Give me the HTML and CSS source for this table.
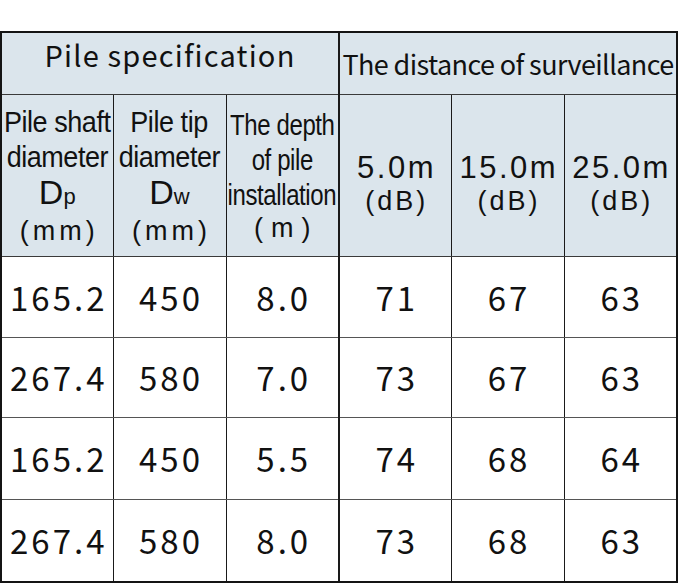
FILE: index.html
```html
<!DOCTYPE html>
<html>
<head>
<meta charset="utf-8">
<link rel="stylesheet" href="styles.css">
</head>
<body>
<div class="wrap">
<table class="spec">
  <colgroup>
    <col class="c1"><col class="c2"><col class="c3"><col class="c4"><col class="c5"><col class="c6">
  </colgroup>
  <thead>
    <tr class="h1">
      <th colspan="3" class="big">Pile specification</th>
      <th colspan="3" class="mid">The distance of surveillance</th>
    </tr>
    <tr class="h2">
      <th><div class="stack"><span class="cond">Pile shaft</span><span class="cond">diameter</span><span class="dd">D<small>p</small></span><span class="par">(mm)</span></div></th>
      <th><div class="stack"><span class="cond">Pile tip</span><span class="cond">diameter</span><span class="dd">D<small>w</small></span><span class="par">(mm)</span></div></th>
      <th class="depth"><div class="stack"><span class="cond">The depth</span><span class="cond">of pile</span><span class="cond">installation</span><span class="par one">(m)</span></div></th>
      <th class="split dcol"><div class="stack"><span class="dist">5.0m</span><span class="par">(dB)</span></div></th>
      <th class="dcol"><div class="stack"><span class="dist">15.0m</span><span class="par">(dB)</span></div></th>
      <th class="dcol"><div class="stack"><span class="dist">25.0m</span><span class="par">(dB)</span></div></th>
    </tr>
  </thead>
  <tbody>
    <tr class="r1"><td>165.2</td><td>450</td><td>8.0</td><td class="split">71</td><td>67</td><td>63</td></tr>
    <tr class="r2"><td>267.4</td><td>580</td><td>7.0</td><td class="split">73</td><td>67</td><td>63</td></tr>
    <tr class="r3"><td>165.2</td><td>450</td><td>5.5</td><td class="split">74</td><td>68</td><td>64</td></tr>
    <tr class="r4"><td>267.4</td><td>580</td><td>8.0</td><td class="split">73</td><td>68</td><td>63</td></tr>
  </tbody>
</table>
</div>
</body>
</html>
```
FILE: styles.css
```css
html, body {
  margin: 0;
  padding: 0;
  background: #ffffff;
}

body {
  padding-top: 31px;
  font-family: "Noto Sans CJK JP", "Noto Sans", sans-serif;
  color: #111111;
}

.wrap {
  width: 678px;
  box-sizing: border-box;
  border: 2px solid #141414;
}

.spec {
  width: 674px;
  border-collapse: collapse;
  border-style: hidden;
  table-layout: fixed;
}

.c1 { width: 111px; }
.c2 { width: 113px; }
.c3 { width: 113px; }
.c4 { width: 112px; }
.c5 { width: 113px; }
.c6 { width: 112px; }

th, td {
  border: 1px solid #3a3a3a;
  padding: 0;
  text-align: center;
  vertical-align: middle;
  font-weight: normal;
  white-space: nowrap;
}

th {
  background: #dbe5ec;
  line-height: 1;
}

th.split, td.split {
  border-left: 2px solid #1a1a1a;
}

.h1 th {
  height: 43px;
}

.h1 th + th {
  border-left: 2px solid #1a1a1a;
}

.big {
  font-size: 29px;
  letter-spacing: 1.2px;
  padding-bottom: 18px;
}

.mid {
  font-size: 27px;
  letter-spacing: -0.6px;
  padding-bottom: 0;
}

.h2 th {
  height: 161px;
  border-left-color: #1a1a1a;
  border-right-color: #1a1a1a;
  font-family: "Liberation Sans", Arial, sans-serif;
}

.h2 th.dcol {
  padding-top: 16px;
  height: 145px;
}

.stack {
  display: flex;
  flex-direction: column;
  align-items: center;
}

.cond {
  display: block;
  transform: scaleX(0.9);
  transform-origin: center;
  font-size: 30px;
  line-height: 35px;
  letter-spacing: -0.5px;
}

.depth .cond {
  transform: scaleX(0.8);
}

.dd {
  display: block;
  font-size: 34px;
  line-height: 36px;
}

.dd small {
  font-size: 22px;
}

.par {
  display: block;
  font-size: 27px;
  line-height: 32px;
  letter-spacing: 4px;
  padding-left: 4px;
}

.par.one {
  letter-spacing: 8px;
  padding-left: 8px;
}

.dcol .par {
  letter-spacing: 3px;
  padding-left: 3px;
}

.dist {
  display: block;
  font-size: 31px;
  line-height: 34px;
  letter-spacing: 2.5px;
  padding-left: 2.5px;
}

td {
  font-size: 33px;
  letter-spacing: 3px;
  padding-left: 3px;
  line-height: 1;
  color: #111111;
  border-left-color: #1a1a1a;
  border-right-color: #1a1a1a;
  border-top-color: #555555;
  border-bottom-color: #555555;
}

.r1 td { height: 80px; }
.r2 td { height: 79px; }
.r3 td { height: 81px; }
.r4 td { height: 81px; }
```
